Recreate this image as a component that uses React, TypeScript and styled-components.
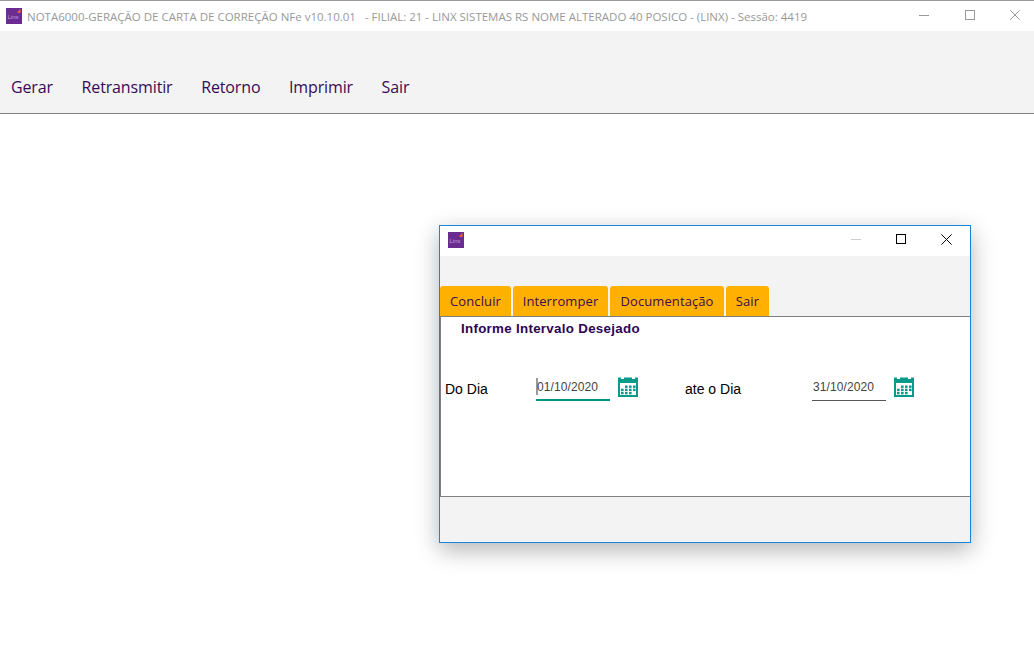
import React from "react";
import styled, { createGlobalStyle } from "styled-components";

const Global = createGlobalStyle`
  html, body { margin: 0; padding: 0; background: #fff; }
  body { font-family: "Noto Sans", "Open Sans", sans-serif; }
  #root { width: 1034px; height: 651px; overflow: hidden; }
`;

const Page = styled.div`
  position: relative;
  width: 1034px;
  height: 651px;
  background: #fff;
  overflow: hidden;
  border-top: 1px solid #999;
  box-sizing: border-box;
`;

const TitleBar = styled.header`
  display: flex;
  align-items: center;
  height: 30px;
  padding-left: 6px;
  background: #fff;
`;

const TitleText = styled.span`
  margin-left: 5px;
  font: 11.5px "Open Sans", "Noto Sans", sans-serif;
  color: #999;
  white-space: pre;
  flex: 1;
`;

const WinControls = styled.div<{ $w: number; $right: number }>`
  display: flex;
  align-items: center;
  margin: 0 ${(p) => p.$right}px 2px 0;
  width: ${(p) => p.$w}px;
  justify-content: space-between;
`;

const Toolbar = styled.nav`
  display: flex;
  align-items: center;
  gap: 28.6px;
  height: 83px;
  padding: 30px 0 0 11px;
  box-sizing: border-box;
  background: #f3f3f3;
  border-bottom: 1px solid #808080;
`;

const MenuItem = styled.span`
  font: 16px "Open Sans", "Noto Sans", sans-serif;
  letter-spacing: -0.13px;
  color: #3a0a55;
`;

const Dialog = styled.section`
  position: absolute;
  left: 439px;
  top: 224px;
  width: 532px;
  height: 318px;
  box-sizing: border-box;
  display: flex;
  flex-direction: column;
  border: 1px solid #1a84dc;
  background: #f3f3f3;
  box-shadow: 0 7px 22px rgba(0, 0, 0, 0.3);
`;

const DialogTitle = styled.header`
  display: flex;
  align-items: center;
  justify-content: space-between;
  height: 30px;
  padding: 0 0 2px 8px;
  box-sizing: border-box;
  background: #fff;
`;

const DialogBar = styled.div`
  display: flex;
  align-items: flex-end;
  gap: 2px;
  height: 60px;
  background: #f3f3f3;
  border-bottom: 1px solid #808080;
`;

const Tab = styled.button<{ $w: number }>`
  width: ${(p) => p.$w}px;
  height: 30px;
  padding: 0;
  border: 0;
  border-radius: 3px 3px 0 0;
  background: #ffb000;
  color: #3a0a55;
  font: 13px "Open Sans", "Noto Sans", sans-serif;
  letter-spacing: 0.1px;
`;

const Content = styled.div`
  flex: 0 0 180px;
  box-sizing: border-box;
  background: #fff;
  border-left: 1px solid #808080;
  border-bottom: 1px solid #808080;
  padding: 3px 0 0 20px;
`;

const Heading = styled.h2`
  margin: 0;
  font: bold 13.33px/17px "Liberation Sans", Arial, sans-serif;
  color: #2c0654;
  letter-spacing: 0.3px;
`;

const FormRow = styled.div`
  display: grid;
  grid-template-columns: 91px 74px 20px 55px 127px 74px 20px;
  margin: 35px 0 0 -16px;
  align-items: start;
`;

const Label = styled.label`
  font: 14px/16px "Liberation Sans", Arial, sans-serif;
  color: #000;
  padding-top: 9px;
`;

const DateField = styled.div<{ $focused?: boolean }>`
  height: 24px;
  box-sizing: border-box;
  display: flex;
  align-items: center;
  padding: 0 0 3px ${(p) => (p.$focused ? 0 : 1)}px;
  font: 12px "Liberation Sans", Arial, sans-serif;
  letter-spacing: 0.1px;
  color: #444;
  margin-top: 5px;
  border-bottom: ${(p) => (p.$focused ? "2px solid #009688" : "1px solid #555")};
`;

const Caret = styled.i`
  display: block;
  width: 2px;
  height: 17px;
  margin-right: -1px;
  background: #999;
`;

const CalendarWrap = styled.span`
  display: flex;
  margin: 5px 0 0 8px;
  width: 20px;
  height: 20px;
`;

const Footer = styled.footer`
  flex: 1;
  background: #f3f3f3;
`;

const LogoText = styled.text`
  font: 6px "Liberation Sans", Arial, sans-serif;
  fill: #c0a6d8;
`;

function LinxLogo() {
  return (
    <svg width="16" height="16" viewBox="0 0 16 16" style={{ flex: "none" }}>
      <rect width="16" height="16" fill="#6a2c91" />
      <path d="M11.5 3.2H13V1.5H14.5V5H11.5Z" fill="#f0642a" />
      <LogoText x="1.5" y="11">Linx</LogoText>
    </svg>
  );
}

function Calendar() {
  const cells: React.ReactNode[] = [];
  const rows = [
    [8, 12, 16],
    [4, 8, 12, 16],
    [4, 8, 12],
  ];
  rows.forEach((r, ri) =>
    r.forEach((x) =>
      cells.push(<rect key={`${ri}-${x}`} x={x - 1} y={8.5 + ri * 3.2} width="2.6" height="2.4" fill="#0a9a8c" />)
    )
  );
  return (
    <svg width="20" height="20" viewBox="0 0 20 20">
      <rect x="0" y="0.5" width="20" height="19.5" fill="#0a9a8c" />
      <rect x="3" y="0" width="3" height="2" fill="#fff" />
      <rect x="14" y="0" width="3" height="2" fill="#fff" />
      <rect x="2" y="6" width="16" height="12" fill="#fff" />
      {cells}
    </svg>
  );
}

function MainControls() {
  return (
    <WinControls $w={101} $right={14}>
      <svg width="10" height="10" viewBox="0 0 10 10"><path d="M0 5.5H10" stroke="#999" /></svg>
      <svg width="10" height="10" viewBox="0 0 10 10"><rect x="0.5" y="0.5" width="9" height="9" fill="none" stroke="#999" /></svg>
      <svg width="10" height="10" viewBox="0 0 10 10"><path d="M0.3 0.3L9.7 9.7M9.7 0.3L0.3 9.7" stroke="#999" /></svg>
    </WinControls>
  );
}

function DialogControls() {
  return (
    <WinControls $w={101} $right={18}>
      <svg width="10" height="10" viewBox="0 0 10 10"><path d="M0 5.5H10" stroke="#ccc" /></svg>
      <svg width="10" height="10" viewBox="0 0 10 10"><rect x="0.5" y="0.5" width="9" height="9" fill="none" stroke="#000" /></svg>
      <svg width="11" height="11" viewBox="0 0 11 11"><path d="M0.4 0.4L10.6 10.6M10.6 0.4L0.4 10.6" stroke="#000" /></svg>
    </WinControls>
  );
}

export default function App() {
  return (
    <>
      <Global />
      <Page>
        <TitleBar>
          <LinxLogo />
          <TitleText>{"NOTA6000-GERAÇÃO DE CARTA DE CORREÇÃO NFe v10.10.01   - FILIAL: 21 - LINX SISTEMAS RS NOME ALTERADO 40 POSICO - (LINX) - Sessão: 4419"}</TitleText>
          <MainControls />
        </TitleBar>
        <Toolbar>
          <MenuItem>Gerar</MenuItem>
          <MenuItem>Retransmitir</MenuItem>
          <MenuItem>Retorno</MenuItem>
          <MenuItem>Imprimir</MenuItem>
          <MenuItem>Sair</MenuItem>
        </Toolbar>
        <Dialog>
          <DialogTitle>
            <LinxLogo />
            <DialogControls />
          </DialogTitle>
          <DialogBar>
            <Tab $w={71}>Concluir</Tab>
            <Tab $w={95}>Interromper</Tab>
            <Tab $w={114}>Documentação</Tab>
            <Tab $w={43}>Sair</Tab>
          </DialogBar>
          <Content>
            <Heading>Informe Intervalo Desejado</Heading>
            <FormRow>
              <Label>Do Dia</Label>
              <DateField $focused>
                <Caret />
                01/10/2020
              </DateField>
              <CalendarWrap><Calendar /></CalendarWrap>
              <span />
              <Label>ate o Dia</Label>
              <DateField>31/10/2020</DateField>
              <CalendarWrap><Calendar /></CalendarWrap>
            </FormRow>
          </Content>
          <Footer />
        </Dialog>
      </Page>
    </>
  );
}
